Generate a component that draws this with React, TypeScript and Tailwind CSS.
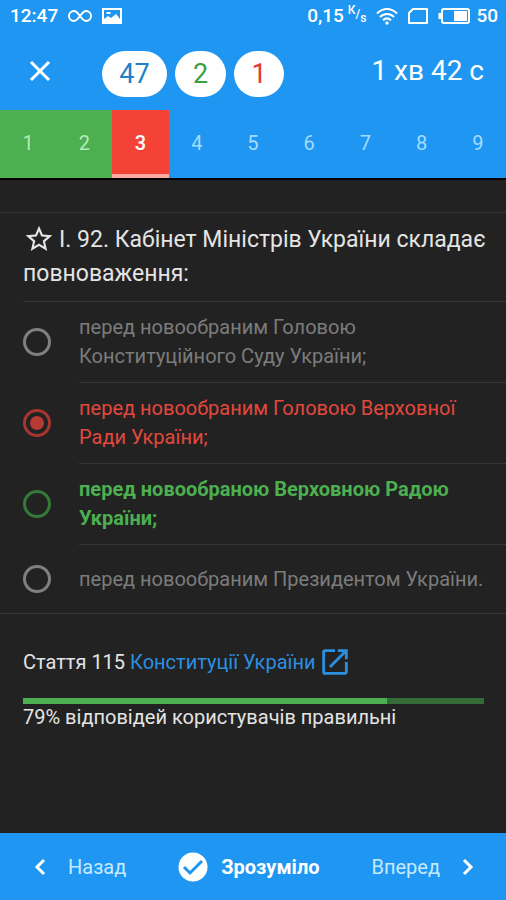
import clsx from "clsx";

const tabs = [1, 2, 3, 4, 5, 6, 7, 8, 9];

const answers = [
  { id: "a", text: "перед новообраним Головою Конституційного Суду України;", state: "idle" },
  { id: "b", text: "перед новообраним Головою Верховної Ради України;", state: "wrong" },
  { id: "c", text: "перед новообраною Верховною Радою України;", state: "right" },
  { id: "d", text: "перед новообраним Президентом України.", state: "idle" },
];

const correctPercent = 79;

function StatusBar() {
  return (
    <div className="flex h-8 items-center justify-between pl-[10px] pr-2 text-[19px] leading-8 font-medium text-white">
      <div className="flex items-center">
        <span>12:47</span>
        <svg viewBox="0 0 24 14" className="ml-[10px] h-[14px] w-6" fill="none" stroke="currentColor" strokeWidth="2">
          <path d="M12 7C9.500 3.500 8.200 2 6 2a5 5 0 0 0 0 10c2.200 0 3.500-1.500 6-5s3.800-5 6-5a5 5 0 0 1 0 10c-2.200 0-3.500-1.500-6-5z" />
        </svg>
        <svg viewBox="0 0 20 16" className="ml-[10px] h-4 w-5" fill="none" stroke="currentColor" strokeWidth="2">
          <rect x="1" y="1" width="18" height="14" />
          <path d="M2 14v-3l4-3 3 2 5-4 4 5v3z" fill="currentColor" stroke="none" />
          <path d="M4.500 5h4" />
        </svg>
      </div>
      <div className="flex items-center">
        <span>0,15</span>
        <span className="ml-1 flex text-[12px] leading-4">
          <span className="-mt-1">К</span>
          <span>/</span>
          <span className="mt-1">s</span>
        </span>
        <svg viewBox="0 0 22 18" className="ml-[10px] h-[18px] w-[22px]" fill="none" stroke="currentColor" strokeWidth="2">
          <path d="M1 6.500C7 .5 15 .5 21 6.500" />
          <path d="M4 10c4-4 10-4 14 0" />
          <path d="M7 13.200c2.500-2.300 5.500-2.300 8 0" />
          <circle cx="11" cy="16" r="1.700" fill="currentColor" stroke="none" />
        </svg>
        <svg viewBox="0 0 20 16" className="ml-[10px] h-4 w-5" fill="none" stroke="currentColor" strokeWidth="2">
          <path d="M1 5l4-4h14v14H1z" strokeLinejoin="round" />
        </svg>
        <svg viewBox="0 0 32 18" className="ml-[10px] h-[18px] w-8" fill="none" stroke="currentColor" strokeWidth="2">
          <rect x="4" y="2" width="27" height="14" rx="2" />
          <path d="M2 6v6" strokeWidth="3" />
          <rect x="16" y="4" width="13" height="10" fill="currentColor" stroke="none" />
        </svg>
        <span className="ml-[6px]">50</span>
      </div>
    </div>
  );
}

function Header() {
  return (
    <header className="bg-[#2096f3]">
      <StatusBar />
      <div className="flex h-[78px] items-center justify-between pr-[22px] pl-[29px]">
        <div className="flex items-center gap-2">
          <button type="button" aria-label="Закрити" className="mr-[43px] text-white">
            <svg viewBox="0 0 22 22" className="h-[22px] w-[22px]" fill="none" stroke="currentColor" strokeWidth="3">
              <path d="M2 2l18 18M20 2L2 20" />
            </svg>
          </button>
          <span className="mt-[6px] h-[46px] w-[65px] rounded-full bg-white text-center text-[27px] leading-[46px] text-[#2080c8]">
            47
          </span>
          <span className="mt-[6px] h-[46px] w-[51px] rounded-full bg-white text-center text-[27px] leading-[46px] text-[#3a9f3e]">
            2
          </span>
          <span className="mt-[6px] h-[46px] w-[50px] rounded-full bg-white text-center text-[27px] leading-[46px] text-[#e53935]">
            1
          </span>
        </div>
        <span className="text-[28px] leading-8 text-white">1 хв 42 с</span>
      </div>
      <nav className="grid h-[68px] grid-cols-9">
        {tabs.map((n) => (
          <button
            key={n}
            type="button"
            className={clsx(
              "border-b-4 pt-[2px] text-[20px]",
              n < 3 && "border-[#4caf50] bg-[#4caf50] text-[#b4eab6]",
              n === 3 && "border-[#ffa9a1] bg-[#f44336] font-medium text-white",
              n > 3 && "border-transparent text-[#a3dcff]"
            )}
          >
            {n}
          </button>
        ))}
      </nav>
    </header>
  );
}

function Question() {
  return (
    <fieldset aria-labelledby="question" className="mt-8 border-y border-[#363636]">
      <h1 id="question" className="mt-[10px] mb-[10px] ml-[23px] text-[23px] leading-[34px] text-[#e4e4e4]">
        <svg viewBox="0 0 24 24" className="mr-1 inline h-8 w-8 align-[-8px]" fill="currentColor">
          <path d="M22 9.240l-7.190-.620L12 2 9.190 8.630 2 9.240l5.460 4.730L5.820 21 12 17.270 18.180 21l-1.630-7.030L22 9.240zM12 15.400l-3.760 2.270 1-4.280-3.320-2.880 4.380-.380L12 6.100l1.710 4.040 4.380.380-3.320 2.880 1 4.280L12 15.400z" />
        </svg>
        I. 92. Кабінет Міністрів України складає повноваження:
      </h1>
      <div className="ml-[23px] border-t border-[#363636]">
        {answers.map(({ id, text, state }, i) => (
          <div key={id} className="flex items-center">
            <input
              id={id}
              type="radio"
              name="answer"
              defaultChecked={state === "wrong"}
              className={clsx(
                "grid h-7 w-7 shrink-0 appearance-none place-items-center rounded-full border-3 before:h-[14px] before:w-[14px] before:rounded-full checked:before:bg-current",
                state === "idle" && "border-[#808080]",
                state === "wrong" && "border-[#a5352e] text-[#b53a32]",
                state === "right" && "border-[#347a38]"
              )}
            />
            <label
              htmlFor={id}
              className={clsx(
                "ml-7 flex-1 pr-5 text-[20px] leading-[29px]",
                i > 0 && "border-t border-[#363636]",
                i === 3 ? "pt-5 pb-[19px]" : "py-[11px]",
                state === "idle" && "text-[#7c7c7c]",
                state === "wrong" && "text-[#e2483c]",
                state === "right" && "font-bold text-[#4caf50]"
              )}
            >
              {text}
            </label>
          </div>
        ))}
      </div>
    </fieldset>
  );
}

export default function App() {
  return (
    <div className="flex min-h-screen flex-col bg-[#222222] font-['Roboto',sans-serif]">
      <Header />
      <main className="flex-1 border-t-2 border-black">
        <Question />
        <section className="mt-8 mr-[22px] ml-[23px] text-[20px] text-[#e4e4e4]">
          <p className="flex h-8 items-center">
            Стаття 115&nbsp;
            <a href="#constitution" className="flex items-center gap-[2px] text-[#2b8fe0]">
              Конституції України
              <svg viewBox="0 0 24 24" className="h-[34px] w-[34px]" fill="currentColor">
                <path d="M19 19H5V5h7V3H5a2 2 0 0 0-2 2v14a2 2 0 0 0 2 2h14c1.100 0 2-.9 2-2v-7h-2v7zM14 3v2h3.590l-9.830 9.830 1.410 1.410L19 6.410V10h2V3h-7z" />
              </svg>
            </a>
          </p>
          <div className="mt-5 h-[6px] bg-[#356b37]">
            <div className="h-full bg-[#4caf50]" style={{ width: `${correctPercent}%` }} />
          </div>
          <p className="leading-[26px]">{correctPercent}% відповідей користувачів правильні</p>
        </section>
      </main>
      <footer className="flex h-[67px] items-center justify-between bg-[#2096f3] pr-8 pl-[34px] text-[20px] text-[#c5eaff]">
        <button type="button" className="flex items-center gap-[22px]">
          <svg viewBox="0 0 12 18" className="h-[18px] w-3 text-white" fill="none" stroke="currentColor" strokeWidth="3">
            <path d="M10 2L3 9l7 7" />
          </svg>
          Назад
        </button>
        <button type="button" className="flex items-center gap-[13px] font-bold text-white">
          <svg viewBox="0 0 30 30" className="h-[30px] w-[30px]">
            <circle cx="15" cy="15" r="14.500" fill="currentColor" />
            <path d="M6 15l6 6L24 9" fill="none" stroke="#2096f3" strokeWidth="3" />
          </svg>
          Зрозуміло
        </button>
        <button type="button" className="flex items-center gap-[22px]">
          Вперед
          <svg viewBox="0 0 12 18" className="h-[18px] w-3 text-white" fill="none" stroke="currentColor" strokeWidth="3">
            <path d="M2 2l7 7-7 7" />
          </svg>
        </button>
      </footer>
    </div>
  );
}
